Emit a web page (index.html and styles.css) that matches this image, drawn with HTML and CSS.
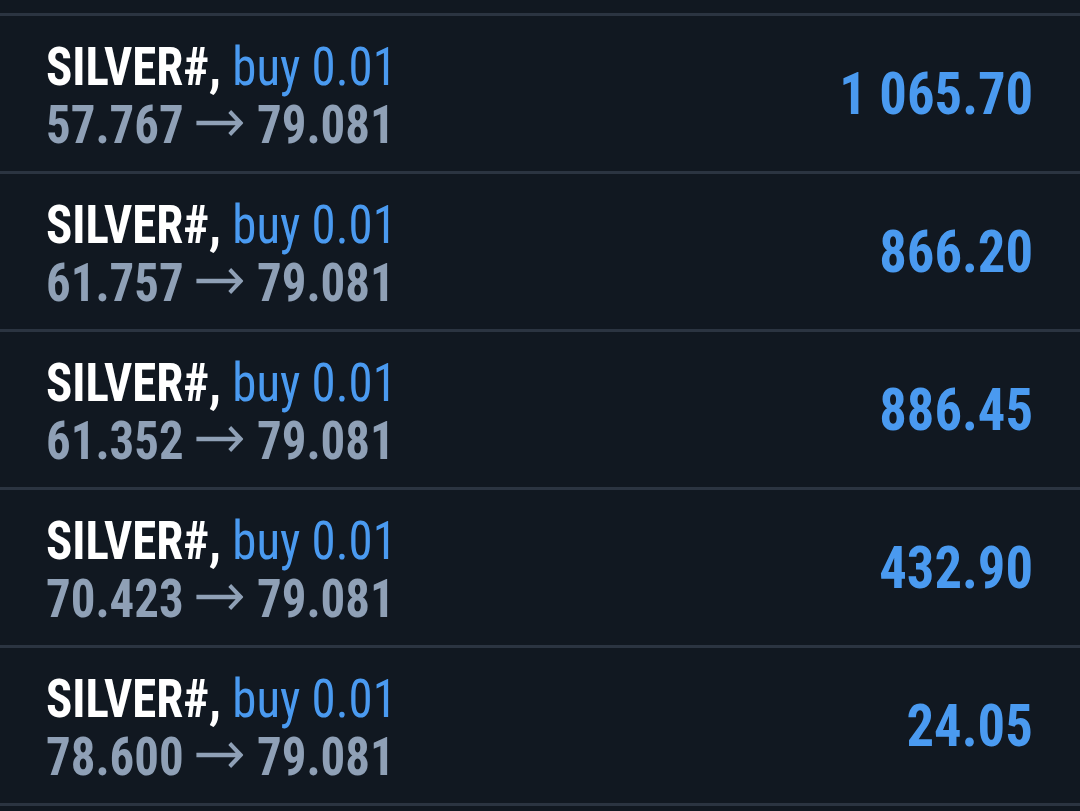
FILE: index.html
```html
<!DOCTYPE html>
<html>
<head>
<meta charset="utf-8">
<link rel="stylesheet" href="styles.css">
</head>
<body>
<div class="list">
  <div class="row">
    <div class="info">
      <div class="title"><span class="sym">SILVER#,</span> <span class="side">buy 0.01</span></div>
      <div class="prices">57.767<svg class="arrow" viewBox="0 0 52 28" width="52" height="28"><path d="M0 14H49M37 2.5L49 14L37 25.5"/></svg>79.081</div>
    </div>
    <div class="profit">1 065.70</div>
  </div>
  <div class="row">
    <div class="info">
      <div class="title"><span class="sym">SILVER#,</span> <span class="side">buy 0.01</span></div>
      <div class="prices">61.757<svg class="arrow" viewBox="0 0 52 28" width="52" height="28"><path d="M0 14H49M37 2.5L49 14L37 25.5"/></svg>79.081</div>
    </div>
    <div class="profit">866.20</div>
  </div>
  <div class="row">
    <div class="info">
      <div class="title"><span class="sym">SILVER#,</span> <span class="side">buy 0.01</span></div>
      <div class="prices">61.352<svg class="arrow" viewBox="0 0 52 28" width="52" height="28"><path d="M0 14H49M37 2.5L49 14L37 25.5"/></svg>79.081</div>
    </div>
    <div class="profit">886.45</div>
  </div>
  <div class="row">
    <div class="info">
      <div class="title"><span class="sym">SILVER#,</span> <span class="side">buy 0.01</span></div>
      <div class="prices">70.423<svg class="arrow" viewBox="0 0 52 28" width="52" height="28"><path d="M0 14H49M37 2.5L49 14L37 25.5"/></svg>79.081</div>
    </div>
    <div class="profit">432.90</div>
  </div>
  <div class="row">
    <div class="info">
      <div class="title"><span class="sym">SILVER#,</span> <span class="side">buy 0.01</span></div>
      <div class="prices">78.600<svg class="arrow" viewBox="0 0 52 28" width="52" height="28"><path d="M0 14H49M37 2.5L49 14L37 25.5"/></svg>79.081</div>
    </div>
    <div class="profit">24.05</div>
  </div>
</div>
</body>
</html>
```
FILE: styles.css
```css
html, body {
  margin: 0;
  padding: 0;
  background: #111821;
  height: 100%;
  overflow: hidden;
}
body {
  font-family: Roboto, "Liberation Sans", sans-serif;
  font-stretch: 75%;
}
.list {
  padding-top: 13px;
}
.row {
  display: flex;
  align-items: center;
  justify-content: space-between;
  height: 155px;
  border-top: 3px solid #2b3441;
  padding: 0 47px 0 46px;
}
.row:last-child {
  border-bottom: 3px solid #2b3441;
}
.info {
  display: flex;
  flex-direction: column;
  padding-top: 4px;
  white-space: nowrap;
  transform: scaleX(0.905);
  transform-origin: left center;
}
.title, .prices {
  font-size: 54px;
  line-height: 58px;
}
.sym {
  color: #ffffff;
  font-weight: 700;
}
.side {
  color: #4a9af0;
  font-weight: 400;
}
.prices {
  color: #8fa0b6;
  font-weight: 700;
}
.arrow {
  display: inline-block;
  margin: 0 15px 0 14px;
  vertical-align: 6px;
  fill: none;
  stroke: #8fa0b6;
  stroke-width: 4.5;
}
.profit {
  color: #4a9af0;
  font-weight: 700;
  font-size: 60px;
  line-height: 60px;
  white-space: nowrap;
  transform: scaleX(0.91);
  transform-origin: right center;
}
```
